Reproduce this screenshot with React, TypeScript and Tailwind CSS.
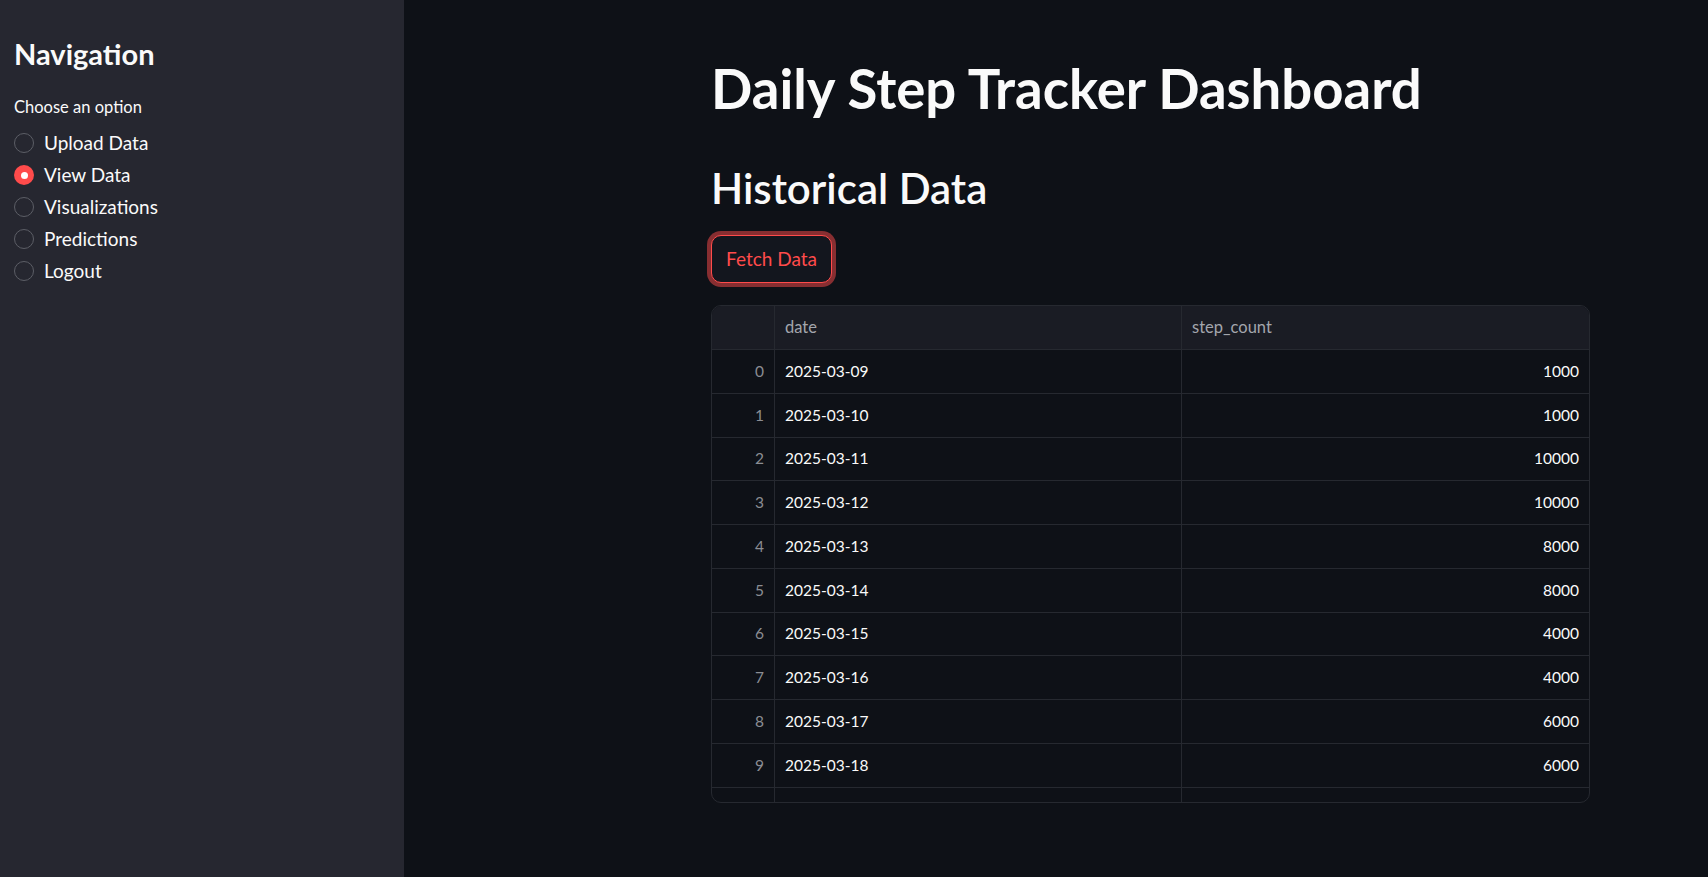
import React, { useState } from "react";

const options = ["Upload Data", "View Data", "Visualizations", "Predictions", "Logout"];

const rows: [string, number][] = [
  ["2025-03-09", 1000],
  ["2025-03-10", 1000],
  ["2025-03-11", 10000],
  ["2025-03-12", 10000],
  ["2025-03-13", 8000],
  ["2025-03-14", 8000],
  ["2025-03-15", 4000],
  ["2025-03-16", 4000],
  ["2025-03-17", 6000],
  ["2025-03-18", 6000],
];

const font = { fontFamily: "Lato, 'Noto Sans', sans-serif" };

export default function App() {
  const [selected, setSelected] = useState("View Data");

  return (
    <div className="flex h-[877px] w-full overflow-hidden bg-[#0e1117] text-[#fafafa]" style={font}>
      {/* Sidebar */}
      <aside className="flex w-[404px] shrink-0 flex-col bg-[#262730] px-[14px] pt-[36px]">
        <h2 className="text-[29px] font-bold leading-[36px]">Navigation</h2>
        <p className="mt-[24px] text-[16.5px] leading-[22px]">Choose an option</p>
        <div className="mt-[9px] flex flex-col">
          {options.map((opt) => {
            const checked = opt === selected;
            return (
              <label
                key={opt}
                onClick={() => setSelected(opt)}
                className="flex h-[32px] cursor-pointer items-center"
              >
                {checked ? (
                  <span className="flex h-[20px] w-[20px] items-center justify-center rounded-full bg-[#ff4b4b]">
                    <span className="h-[7px] w-[7px] rounded-full bg-white" />
                  </span>
                ) : (
                  <span className="h-[20px] w-[20px] rounded-full border border-[#5c5e66]" />
                )}
                <span className="ml-[10px] text-[19px] leading-[24px]">{opt}</span>
              </label>
            );
          })}
        </div>
      </aside>

      {/* Main */}
      <main className="flex-1">
        <div className="ml-[307px] flex w-[879px] flex-col pt-[56px]">
          <h1 className="text-[54.5px] font-bold leading-[64px]">Daily Step Tracker Dashboard</h1>
          <h2 className="mt-[42px] text-[42px] font-semibold leading-[52px]">Historical Data</h2>

          <div className="mt-[21px]">
            <button className="h-[48px] rounded-[10px] border border-[#ff4b4b] bg-[#13161e] px-[14px] text-[19px] text-[#ff4b4b] shadow-[0_0_0_4px_rgba(255,75,75,0.5)]">
              Fetch Data
            </button>
          </div>

          {/* Data table */}
          <div className="mt-[22px] h-[498px] overflow-hidden rounded-[10px] border border-[#262930] text-[15.5px]">
            <div className="grid h-[44px] grid-cols-[63px_407px_1fr] border-b border-[#262930] bg-[#1a1c24] text-[16.5px] text-[#a3a6ad]">
              <div className="border-r border-[#262930]" />
              <div className="flex items-center border-r border-[#262930] px-[10px]">date</div>
              <div className="flex items-center px-[10px]">step_count</div>
            </div>
            {rows.map(([date, count], i) => (
              <div
                key={date}
                className="grid h-[43.75px] grid-cols-[63px_407px_1fr] border-b border-[#262930]"
              >
                <div className="flex items-center justify-end border-r border-[#262930] px-[10px] text-[#8b8d93]">
                  {i}
                </div>
                <div className="flex items-center border-r border-[#262930] px-[10px]">{date}</div>
                <div className="flex items-center justify-end px-[10px]">{count}</div>
              </div>
            ))}
            <div className="grid h-[43.75px] grid-cols-[63px_407px_1fr]">
              <div className="border-r border-[#262930]" />
              <div className="border-r border-[#262930]" />
              <div />
            </div>
          </div>
        </div>
      </main>
    </div>
  );
}
